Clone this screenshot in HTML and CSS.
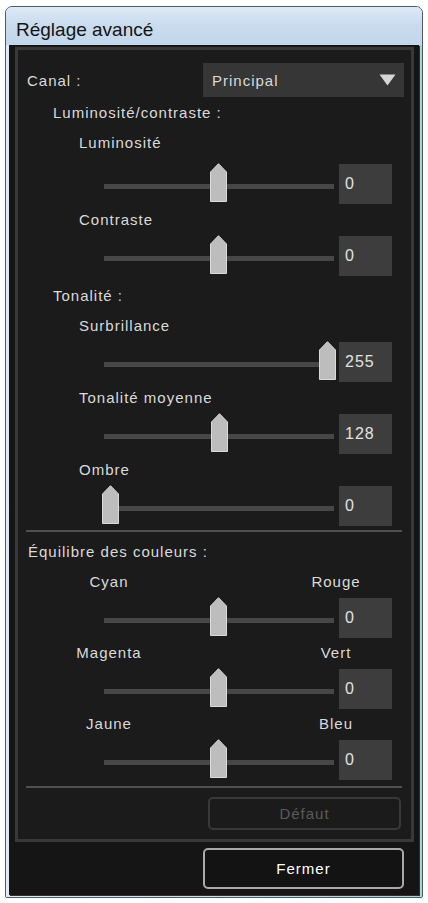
FILE: index.html
```html
<!DOCTYPE html>
<html lang="fr">
<head>
<meta charset="utf-8">
<title>Réglage avancé</title>
<link rel="stylesheet" href="styles.css">
</head>
<body>
<div class="window">
  <div class="titlebar">Réglage avancé</div>
  <div class="frame">
    <div class="client">
      <div class="panel">
        <div class="canal-row">
          <span class="text">Canal :</span>
          <div class="dropdown">
            <span class="text">Principal</span>
            <svg class="caret" width="17" height="12" viewBox="0 0 17 12"><polygon points="0.5,0.5 16.5,0.5 8.5,11.5" fill="#d6d6d6"/></svg>
          </div>
        </div>

        <div class="group-title group-title--first text">Luminosité/contraste :</div>
        <div class="label text">Luminosité</div>
        <div class="slider slider--loose">
          <div class="track-area"><div class="track"></div>
            <svg class="thumb" style="left:108px" width="17" height="39" viewBox="0 0 17 39"><polygon points="0.5,9 8.5,0.7 16.5,9 16.5,38.5 0.5,38.5" fill="#bdbdbd" stroke="#dadada" stroke-width="1"/></svg>
          </div>
          <div class="value">0</div>
        </div>
        <div class="label text">Contraste</div>
        <div class="slider">
          <div class="track-area"><div class="track"></div>
            <svg class="thumb" style="left:108px" width="17" height="39" viewBox="0 0 17 39"><polygon points="0.5,9 8.5,0.7 16.5,9 16.5,38.5 0.5,38.5" fill="#bdbdbd" stroke="#dadada" stroke-width="1"/></svg>
          </div>
          <div class="value">0</div>
        </div>

        <div class="group-title text">Tonalité :</div>
        <div class="label text">Surbrillance</div>
        <div class="slider">
          <div class="track-area"><div class="track"></div>
            <svg class="thumb" style="left:217px" width="17" height="39" viewBox="0 0 17 39"><polygon points="0.5,9 8.5,0.7 16.5,9 16.5,38.5 0.5,38.5" fill="#bdbdbd" stroke="#dadada" stroke-width="1"/></svg>
          </div>
          <div class="value">255</div>
        </div>
        <div class="label text">Tonalité moyenne</div>
        <div class="slider">
          <div class="track-area"><div class="track"></div>
            <svg class="thumb" style="left:109px" width="17" height="39" viewBox="0 0 17 39"><polygon points="0.5,9 8.5,0.7 16.5,9 16.5,38.5 0.5,38.5" fill="#bdbdbd" stroke="#dadada" stroke-width="1"/></svg>
          </div>
          <div class="value">128</div>
        </div>
        <div class="label text">Ombre</div>
        <div class="slider">
          <div class="track-area"><div class="track"></div>
            <svg class="thumb" style="left:0px" width="17" height="39" viewBox="0 0 17 39"><polygon points="0.5,9 8.5,0.7 16.5,9 16.5,38.5 0.5,38.5" fill="#bdbdbd" stroke="#dadada" stroke-width="1"/></svg>
          </div>
          <div class="value">0</div>
        </div>

        <div class="separator separator--top"></div>

        <div class="group-title group-title--wide text">Équilibre des couleurs :</div>
        <div class="pair text"><span>Cyan</span><span>Rouge</span></div>
        <div class="slider">
          <div class="track-area"><div class="track"></div>
            <svg class="thumb" style="left:108px" width="17" height="39" viewBox="0 0 17 39"><polygon points="0.5,9 8.5,0.7 16.5,9 16.5,38.5 0.5,38.5" fill="#bdbdbd" stroke="#dadada" stroke-width="1"/></svg>
          </div>
          <div class="value">0</div>
        </div>
        <div class="pair text"><span>Magenta</span><span>Vert</span></div>
        <div class="slider">
          <div class="track-area"><div class="track"></div>
            <svg class="thumb" style="left:108px" width="17" height="39" viewBox="0 0 17 39"><polygon points="0.5,9 8.5,0.7 16.5,9 16.5,38.5 0.5,38.5" fill="#bdbdbd" stroke="#dadada" stroke-width="1"/></svg>
          </div>
          <div class="value">0</div>
        </div>
        <div class="pair text"><span>Jaune</span><span>Bleu</span></div>
        <div class="slider">
          <div class="track-area"><div class="track"></div>
            <svg class="thumb" style="left:108px" width="17" height="39" viewBox="0 0 17 39"><polygon points="0.5,9 8.5,0.7 16.5,9 16.5,38.5 0.5,38.5" fill="#bdbdbd" stroke="#dadada" stroke-width="1"/></svg>
          </div>
          <div class="value">0</div>
        </div>

        <div class="separator"></div>
        <div class="btn-default text">Défaut</div>
      </div>
      <div class="footer">
        <div class="btn-close text">Fermer</div>
      </div>
    </div>
  </div>
</div>
</body>
</html>
```

FILE: styles.css
```css
* { box-sizing: border-box; }

body {
  margin: 0;
  background: #ffffff;
  font-family: "Liberation Sans", Arial, sans-serif;
}

.window {
  margin: 6px 0 0 5px;
  width: 418px;
  border: 1px solid #4f5963;
  border-radius: 7px 7px 2px 2px;
  background: #cadff1;
  overflow: hidden;
}

.titlebar {
  height: 38px;
  padding: 8px 0 0 10px;
  line-height: 30px;
  font-size: 19px;
  color: #141414;
  background: linear-gradient(#dde9f6 0%, #cadcef 45%, #c1d7eb 100%);
}

.frame {
  padding: 0 3px 2px 3px;
  background: linear-gradient(90deg, #dfeaf6 0%, #cadff1 50%, #9fd6d6 100%);
}

.client {
  height: 850px;
  background: #151515;
  padding-top: 2px;
  box-shadow: 1px 1px 0 #3a2a2e;
}

.text {
  font-size: 15px;
  letter-spacing: 1px;
  color: #dadada;
}

.panel {
  margin: 0 5px 0 6px;
  border: 3px solid #393939;
  background: #1b1b1b;
  padding: 13px 7px 9px 0;
  display: flex;
  flex-direction: column;
}

.canal-row {
  height: 34px;
  display: flex;
  align-items: center;
}

.canal-row > .text {
  padding-left: 9px;
}

.dropdown {
  margin-left: auto;
  width: 201px;
  height: 34px;
  background: #363636;
  display: flex;
  align-items: center;
  padding: 0 8px 0 9px;
}

.dropdown .caret {
  margin-left: auto;
}

.group-title {
  margin-top: 10px;
  height: 20px;
  line-height: 20px;
  padding-left: 35px;
}

.group-title--first { margin-top: 6px; }
.group-title--wide { padding-left: 10px; }

.label {
  margin-top: 6px;
  height: 20px;
  line-height: 20px;
  padding-left: 61px;
}

.group-title + .label,
.group-title + .pair {
  margin-top: 10px;
}

.pair {
  margin-top: 5px;
  height: 20px;
  line-height: 20px;
  padding-left: 41px;
  display: flex;
  gap: 127px;
}

.pair span {
  width: 100px;
  text-align: center;
}

.slider {
  margin-top: 6px;
  height: 40px;
  padding-left: 84px;
  display: flex;
  gap: 3px;
}

.slider--loose { margin-top: 11px; }

.track-area {
  position: relative;
  width: 234px;
  height: 40px;
}

.track {
  margin: 20px 2px 0 2px;
  height: 5px;
  background: #474747;
}

.thumb {
  position: absolute;
  top: -1px;
  display: block;
}

.value {
  width: 53px;
  height: 40px;
  background: #3d3d3d;
  padding-left: 6px;
  line-height: 40px;
  font-size: 16px;
  letter-spacing: 1px;
  color: #e2e2e2;
}

.separator {
  margin: 6px 2px 0 8px;
  height: 2px;
  background: #505050;
}

.separator--top { margin-top: 4px; }

.btn-default {
  margin: 9px 3px 0 auto;
  width: 193px;
  height: 33px;
  border: 2px solid #393939;
  border-radius: 5px;
  text-align: center;
  line-height: 29px;
  color: #5a5a5a;
}

.footer {
  display: flex;
  justify-content: flex-end;
  padding: 6px 15px 0 0;
}

.btn-close {
  width: 201px;
  height: 41px;
  border: 2px solid #a9a9a9;
  border-radius: 5px;
  background: #131313;
  text-align: center;
  line-height: 37px;
  color: #ffffff;
}
```
